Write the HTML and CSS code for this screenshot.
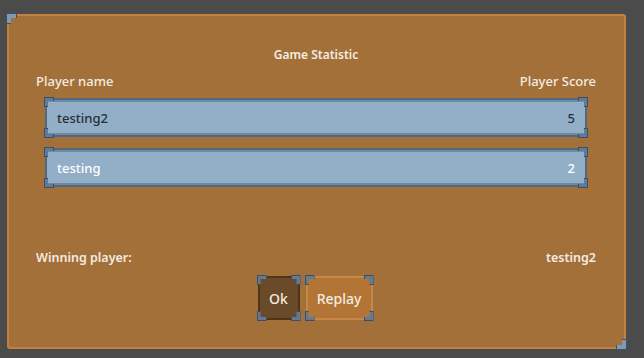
FILE: index.html
```html
<!DOCTYPE html>
<html lang="en">
<head>
    <meta charset="UTF-8">
    <title>Game Statistic</title>
    <link rel="stylesheet" href="styles.css">
</head>
<body>
    <div class="window">
        <span class="corner tl"></span>
        <span class="corner br"></span>

        <div class="title">Game Statistic</div>

        <div class="header">
            <span>Player name</span>
            <span>Player Score</span>
        </div>

        <div class="rows">
            <div class="row">
                <span class="orn o-tl"></span><span class="orn o-tr"></span>
                <span class="orn o-bl"></span><span class="orn o-br"></span>
                <span>testing2</span>
                <span>5</span>
            </div>
            <div class="row hover">
                <span class="orn o-tl"></span><span class="orn o-tr"></span>
                <span class="orn o-bl"></span><span class="orn o-br"></span>
                <span>testing</span>
                <span>2</span>
            </div>
        </div>

        <div class="winner">
            <span>Winning player:</span>
            <span>testing2</span>
        </div>

        <div class="buttons">
            <button class="btn ok">
                <span class="orn o-tl"></span><span class="orn o-tr"></span>
                <span class="orn o-bl"></span><span class="orn o-br"></span>
                Ok
            </button>
            <button class="btn replay">
                <span class="orn o-tl"></span><span class="orn o-tr"></span>
                <span class="orn o-bl"></span><span class="orn o-br"></span>
                Replay
            </button>
        </div>
    </div>
</body>
</html>
```

FILE: styles.css
```css
body {
    margin: 0;
    background: #4b4b4b;
    font-family: 'Noto Sans', sans-serif;
    color: #f4ece0;
    width: 644px;
    height: 358px;
    overflow: hidden;
}

.window {
    position: relative;
    box-sizing: border-box;
    margin: 14px 0 0 7px;
    width: 619px;
    height: 335px;
    background: #a3703a;
    border: 2px solid #c2823f;
    border-radius: 3px;
    display: flex;
    flex-direction: column;
    padding: 0 28px 0 27px;
}

/* steel corner pieces on the window */
.corner {
    position: absolute;
    width: 11px;
    height: 11px;
    background: #7f99b5;
    border: 1px solid #3d5068;
    box-sizing: border-box;
}

.corner.tl {
    left: -3px;
    top: -3px;
    clip-path: polygon(0 0, 100% 0, 100% 45%, 45% 45%, 45% 100%, 0 100%);
}

.corner.br {
    right: -3px;
    bottom: -3px;
    clip-path: polygon(100% 100%, 0 100%, 0 55%, 55% 55%, 55% 0, 100% 0);
}

.title {
    text-align: center;
    font-size: 12px;
    font-weight: 600;
    margin-top: 31px;
    line-height: 16px;
}

.header {
    display: flex;
    justify-content: space-between;
    font-size: 13px;
    font-weight: 500;
    margin-top: 9px;
    line-height: 18px;
}

.rows {
    display: flex;
    flex-direction: column;
    gap: 11px;
    margin: 8px 9px 0 9px;
}

.row {
    position: relative;
    height: 39px;
    box-sizing: border-box;
    display: flex;
    justify-content: space-between;
    align-items: center;
    padding: 0 10px 0 10px;
    background: #93aec7;
    border: 2px solid #51687f;
    box-shadow: inset 0 2px 0 #6f89a3, inset 0 -2px 0 #6f89a3;
    border-radius: 2px;
    font-size: 13px;
    font-weight: 500;
    color: #26303c;
}

.row.hover {
    color: #ffffff;
}

/* small ornaments at each corner */
.orn {
    position: absolute;
    width: 10px;
    height: 10px;
    background: #5f7b97;
    border: 1px solid #3b4e63;
    box-sizing: border-box;
}

.o-tl {
    left: -3px;
    top: -3px;
    clip-path: polygon(0 0, 100% 0, 100% 40%, 40% 40%, 40% 100%, 0 100%);
}

.o-tr {
    right: -3px;
    top: -3px;
    clip-path: polygon(0 0, 100% 0, 100% 100%, 60% 100%, 60% 40%, 0 40%);
}

.o-bl {
    left: -3px;
    bottom: -3px;
    clip-path: polygon(0 0, 40% 0, 40% 60%, 100% 60%, 100% 100%, 0 100%);
}

.o-br {
    right: -3px;
    bottom: -3px;
    clip-path: polygon(60% 0, 100% 0, 100% 100%, 0 100%, 0 60%, 60% 60%);
}

.winner {
    display: flex;
    justify-content: space-between;
    font-size: 12.5px;
    font-weight: 600;
    margin-top: 62px;
    line-height: 18px;
}

.buttons {
    display: flex;
    justify-content: center;
    gap: 6px;
    margin-top: 9px;
    padding-right: 2px;
}

.btn {
    position: relative;
    height: 44px;
    box-sizing: border-box;
    font-family: 'Noto Sans', sans-serif;
    font-size: 14px;
    font-weight: 500;
    color: #f4ece0;
    border-radius: 3px;
    padding: 0;
}

.btn.ok {
    width: 42px;
    background: #6b4a29;
    border: 2px solid #4e3519;
}

.btn.replay {
    width: 67px;
    background: #b27536;
    border: 2px solid #c8874a;
}
```
